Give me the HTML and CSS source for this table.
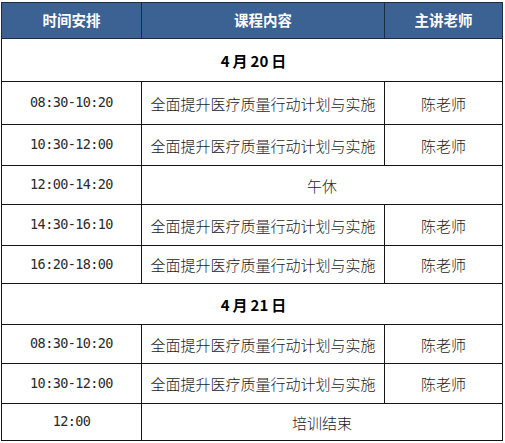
FILE: index.html
```html
<!DOCTYPE html>
<html lang="zh">
<head>
<meta charset="utf-8">
<link rel="stylesheet" href="styles.css">
</head>
<body>
<div class="wrap">
<table class="schedule">
  <colgroup><col class="c1"><col class="c2"><col class="c3"></colgroup>
  <thead>
    <tr class="head"><th>时间安排</th><th>课程内容</th><th>主讲老师</th></tr>
  </thead>
  <tbody>
    <tr class="date"><td colspan="3"><span class="num">4</span>月<span class="num">20</span>日</td></tr>
    <tr><td class="time">08:30-10:20</td><td>全面提升医疗质量行动计划与实施</td><td>陈老师</td></tr>
    <tr><td class="time">10:30-12:00</td><td>全面提升医疗质量行动计划与实施</td><td>陈老师</td></tr>
    <tr><td class="time">12:00-14:20</td><td colspan="2">午休</td></tr>
    <tr><td class="time">14:30-16:10</td><td>全面提升医疗质量行动计划与实施</td><td>陈老师</td></tr>
    <tr><td class="time">16:20-18:00</td><td>全面提升医疗质量行动计划与实施</td><td>陈老师</td></tr>
    <tr class="date"><td colspan="3"><span class="num">4</span>月<span class="num">21</span>日</td></tr>
    <tr><td class="time">08:30-10:20</td><td>全面提升医疗质量行动计划与实施</td><td>陈老师</td></tr>
    <tr><td class="time">10:30-12:00</td><td>全面提升医疗质量行动计划与实施</td><td>陈老师</td></tr>
    <tr><td class="time">12:00</td><td colspan="2">培训结束</td></tr>
  </tbody>
</table>
</div>
</body>
</html>
```
FILE: styles.css
```css
html, body {
  margin: 0;
  padding: 0;
  background: #ffffff;
}
.wrap {
  padding: 2px 0 0 1px;
}
.schedule {
  width: 501px;
  border-collapse: collapse;
  table-layout: fixed;
  font-family: "Noto Sans CJK SC", "Noto Sans", sans-serif;
  color: #1a1a1a;
}
.c1 { width: 140px; }
.c2 { width: 243px; }
.c3 { width: 118px; }
.schedule th,
.schedule td {
  border: 1px solid #151515;
  padding: 0;
  text-align: center;
  vertical-align: middle;
  font-size: 15px;
  line-height: 1;
  font-weight: 300;
}
.head th {
  background: #3c6193;
  color: #ffffff;
  font-weight: 700;
  font-size: 14.5px;
  border-color: #1e2c40;
  height: 35px;
}
.schedule td.time {
  font-family: "DejaVu Sans Mono", "Liberation Mono", monospace;
  font-size: 13.5px;
  letter-spacing: -0.6px;
  font-weight: 400;
  color: #2a2a2a;
}
.schedule .date td {
  font-weight: 700;
  font-size: 15px;
  color: #000;
}
.num {
  margin: 0 3px;
}
tbody tr:nth-child(1) { height: 43px; }
tbody tr:nth-child(2) { height: 43px; }
tbody tr:nth-child(3) { height: 41px; }
tbody tr:nth-child(4) { height: 39px; }
tbody tr:nth-child(5) { height: 41px; }
tbody tr:nth-child(6) { height: 38px; }
tbody tr:nth-child(7) { height: 41px; }
tbody tr:nth-child(8) { height: 39px; }
tbody tr:nth-child(9) { height: 40px; }
tbody tr:nth-child(10) { height: 37px; }
```
